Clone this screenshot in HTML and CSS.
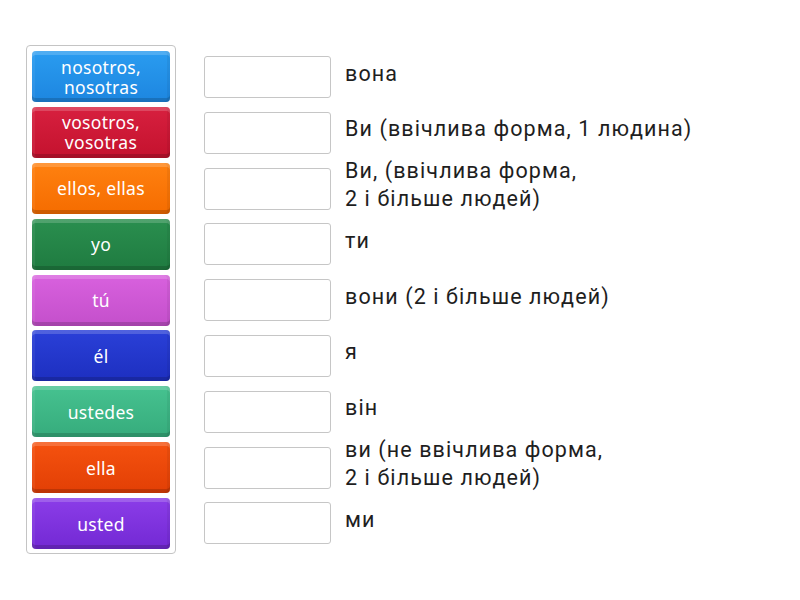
FILE: index.html
```html
<!DOCTYPE html>
<html>
<head>
<meta charset="utf-8">
<link rel="stylesheet" href="styles.css">
</head>
<body>
<div class="page">
  <div class="bank">
    <div class="tile c1">nosotros,<br>nosotras</div>
    <div class="tile c2">vosotros,<br>vosotras</div>
    <div class="tile c3">ellos, ellas</div>
    <div class="tile c4">yo</div>
    <div class="tile c5">tú</div>
    <div class="tile c6">él</div>
    <div class="tile c7">ustedes</div>
    <div class="tile c8">ella</div>
    <div class="tile c9">usted</div>
  </div>
  <div class="targets">
    <div class="row"><div class="slot"></div><div class="label">вона</div></div>
    <div class="row"><div class="slot"></div><div class="label">Ви (ввічлива форма, 1 людина)</div></div>
    <div class="row"><div class="slot"></div><div class="label">Ви, (ввічлива форма,<br>2 і більше людей)</div></div>
    <div class="row"><div class="slot"></div><div class="label">ти</div></div>
    <div class="row"><div class="slot"></div><div class="label">вони (2 і більше людей)</div></div>
    <div class="row"><div class="slot"></div><div class="label">я</div></div>
    <div class="row"><div class="slot"></div><div class="label">він</div></div>
    <div class="row"><div class="slot"></div><div class="label">ви (не ввічлива форма,<br>2 і більше людей)</div></div>
    <div class="row"><div class="slot"></div><div class="label">ми</div></div>
  </div>
</div>
</body>
</html>
```
FILE: styles.css
```css
html, body {
  margin: 0;
  padding: 0;
  background: #ffffff;
}
.page {
  width: 800px;
  height: 600px;
  display: flex;
  align-items: flex-start;
  padding: 45px 0 0 26px;
  box-sizing: border-box;
}
.bank {
  width: 150px;
  box-sizing: border-box;
  border: 1px solid #c4c4c4;
  border-radius: 4px;
  padding: 5px 5px 4px 5px;
  display: flex;
  flex-direction: column;
  gap: 4.9px;
}
.tile {
  height: 51px;
  border-radius: 4px;
  display: flex;
  align-items: center;
  justify-content: center;
  text-align: center;
  color: #ffffff;
  font-family: "Noto Sans", "Open Sans", sans-serif;
  font-weight: 400;
  font-size: 17.5px;
  line-height: 20px;
  letter-spacing: 0.3px;
  box-shadow: inset 0 4px 0 rgba(255,255,255,0.18), inset 0 -4px 0 rgba(0,0,0,0.16), inset 3px 0 0 rgba(255,255,255,0.06), inset -3px 0 0 rgba(0,0,0,0.05);
}
.c1 { background: linear-gradient(#2a9cf0, #1d86e0); }
.c2 { background: linear-gradient(#d7203f, #c4122e); }
.c3 { background: linear-gradient(#ff8110, #f56c00); }
.c4 { background: linear-gradient(#2a8f4f, #1f7b40); }
.c5 { background: linear-gradient(#d861de, #c44fcb); }
.c6 { background: linear-gradient(#2a40d8, #1d2fc0); }
.c7 { background: linear-gradient(#46c290, #36ac7c); }
.c8 { background: linear-gradient(#f5520f, #e23f05); }
.c9 { background: linear-gradient(#8b3de8, #7329d4); }
.targets {
  margin-left: 28px;
  margin-top: 11px;
  display: flex;
  flex-direction: column;
  gap: 13.8px;
}
.row {
  display: flex;
  align-items: center;
  height: 42px;
}
.slot {
  width: 127px;
  height: 42px;
  box-sizing: border-box;
  border: 1px solid #c6c6c6;
  border-radius: 3px;
  background: #ffffff;
  flex: none;
}
.label {
  margin-left: 14px;
  padding-bottom: 7px;
  font-family: Roboto, "Noto Sans", sans-serif;
  font-size: 21.5px;
  line-height: 28px;
  letter-spacing: 1.1px;
  color: #1e1e1e;
  white-space: nowrap;
}
```
